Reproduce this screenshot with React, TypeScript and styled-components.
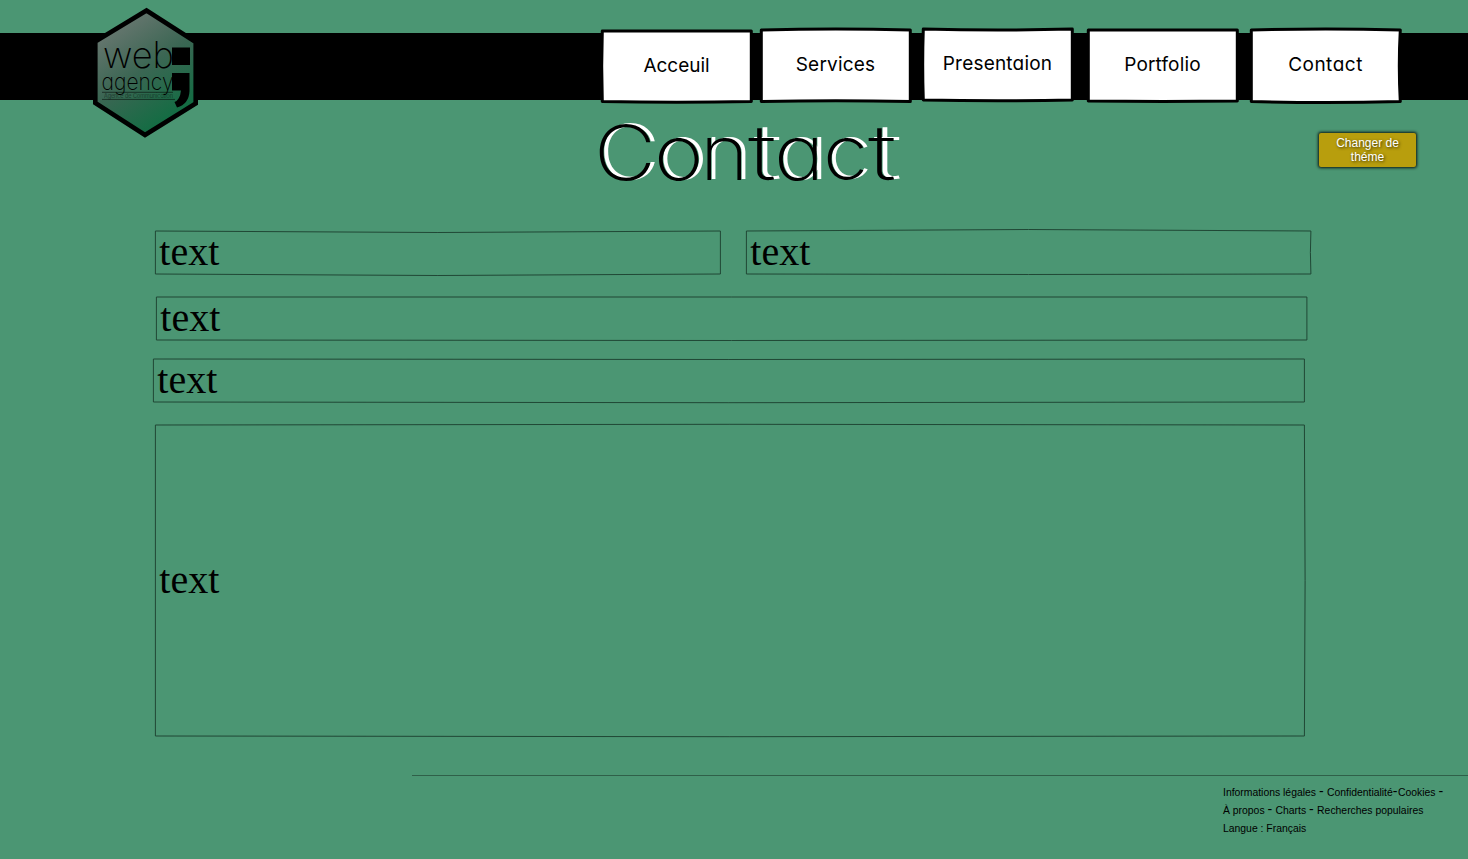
import React from "react";
import styled, { createGlobalStyle } from "styled-components";

const GlobalStyle = createGlobalStyle`
  * { box-sizing: border-box; }
  html, body { margin: 0; padding: 0; background: #4b9673; }
  body { width: 100%; height: 859px; overflow: hidden; color: #000; font-family: "Liberation Sans", Arial, sans-serif; }
`;

const Page = styled.div`
  height: 859px;
  overflow: hidden;
  display: flex;
  flex-direction: column;
`;

const Header = styled.header`
  margin-top: 33px;
  height: 67px;
  flex: none;
  background: #000;
  display: flex;
  align-items: flex-start;
  justify-content: space-between;
  padding: 0 68px 0 92px;
`;

const Logo = styled.svg`
  width: 108px;
  height: 132px;
  margin-top: -26px;
  overflow: visible;
  flex: none;
`;

const Nav = styled.nav`
  display: flex;
  align-items: flex-start;
`;

const NavLink = styled.a<{ $gap: number; $top: number; $height: number; $drop: number }>`
  position: relative;
  width: 149px;
  height: ${(p) => p.$height}px;
  margin-left: ${(p) => p.$gap}px;
  margin-top: ${(p) => p.$top}px;
  padding-top: ${(p) => p.$drop}px;
  display: flex;
  justify-content: center;
  color: #000;
`;

const NavLabel = styled.span<{ $spacing: number }>`
  position: relative;
  font: 370 19px/24px Inter, sans-serif;
  font-feature-settings: "cv11" 1;
  letter-spacing: ${(p) => p.$spacing}px;
  white-space: nowrap;
`;

const Outline = styled.svg`
  position: absolute;
  inset: 0;
  width: 100%;
  height: 100%;
  overflow: visible;
`;

const TitleRow = styled.div`
  height: 131px;
  flex: none;
  display: flex;
  justify-content: space-between;
  padding: 0 52px 0 594px;
`;

const Title = styled.h1`
  margin: 5px 0 0;
  font: 150 76px/94px Inter, sans-serif;
  font-feature-settings: "cv11" 1;
  color: #000;
  text-shadow: 4px -1px 0 #fff;
  white-space: nowrap;
`;

const Letter = styled.span<{ $w: number; $stretch: number }>`
  display: inline-block;
  width: ${(p) => p.$w}px;
  transform: scaleX(${(p) => p.$stretch});
  transform-origin: 0 50%;
`;

const ThemeButton = styled.button`
  width: 97px;
  height: 34px;
  margin-top: 33px;
  padding: 0 0 1px;
  border: 0;
  border-radius: 2px;
  background: #b89e0d;
  color: #fff;
  font: 12px/14px "Liberation Sans", Arial, sans-serif;
  text-shadow: 1px 1px 3px rgba(0, 0, 0, 0.7);
  box-shadow: 0 0 3px 1px rgba(0, 0, 0, 0.85);
`;

const Form = styled.form`
  display: flex;
  flex-direction: column;
  height: 505px;
  flex: none;
`;

const FieldRow = styled.div`
  display: flex;
  gap: 26px;
`;

const Field = styled.label<{ $x: number; $w: number; $h: number; $below: number }>`
  position: relative;
  margin-left: ${(p) => p.$x}px;
  margin-bottom: ${(p) => p.$below}px;
  width: ${(p) => p.$w}px;
  height: ${(p) => p.$h}px;
  padding: 0 4.3px 2px;
  display: flex;
  align-items: center;
  font: 40px/46px "Liberation Serif", "Times New Roman", serif;
`;

const Footer = styled.footer`
  margin-top: 39px;
  margin-left: 412px;
  border-top: 1px solid #2f6049;
  padding: 8px 0 0 811px;
  font-size: 10.4px;
  line-height: 18px;
  white-space: nowrap;
`;

const Dash = styled.span`
  font-size: 14px;
  line-height: 10px;
  letter-spacing: 0.5px;
`;

type Bow = { t?: number; r?: number; b?: number; l?: number };

type FrameProps = { w: number; h: number; bow: Bow; stroke: string; fill: string; width: number; dx?: number };

function SketchFrame({ w, h, bow, stroke, fill, width, dx = 0 }: FrameProps) {
  const { t = 0, r = 0, b = 0, l = 0 } = bow;
  const d = `M0 0Q${w / 2} ${t * 2} ${w} 0Q${w + r * 2} ${h / 2} ${w} ${h}Q${w / 2} ${h + b * 2} 0 ${h}Q${l * 2} ${h / 2} 0 0Z`;
  return (
    <Outline>
      <path d={d} transform={`translate(${dx} 0)`} fill={fill} stroke={stroke} strokeWidth={width} strokeLinejoin="round" />
    </Outline>
  );
}

const links = [
  { text: "Acceuil", gap: 0, top: -2, h: 70.5, drop: 23, spacing: -0.05, bow: { b: 0.8, l: -0.6 } },
  { text: "Services", gap: 10, top: -3, h: 71.5, drop: 23, spacing: 0.2, bow: { t: -1, b: -0.7 } },
  { text: "Presentaion", gap: 13, top: -4, h: 71, drop: 23, spacing: 0.2, bow: { t: 1, b: 0.8, l: -0.6 } },
  { text: "Portfolio", gap: 16, top: -3, h: 71, drop: 23, spacing: 0.15, bow: { b: 0.4 } },
  { text: "Contact", gap: 14, top: -3, h: 71.5, drop: 23, spacing: 0.5, bow: { t: -1, b: 1, r: -1 } },
];

const letters: [string, number, number][] = [
  ["C", 59.6, 1.12],
  ["o", 46.6, 1.11],
  ["n", 48, 1.09],
  ["t", 26.3, 1.38],
  ["a", 48.3, 1.12],
  ["c", 45.7, 1.08],
  ["t", 30, 1.38],
];

function TextField({ x = 0, w, h = 43, below = 0, bow }: { x?: number; w: number; h?: number; below?: number; bow: Bow }) {
  return (
    <Field $x={x} $w={w} $h={h} $below={below}>
      <SketchFrame w={w} h={h} bow={bow} stroke="#204735" fill="none" width={1} dx={0.4} />
      text
    </Field>
  );
}

export default function App() {
  return (
    <Page>
      <GlobalStyle />
      <Header>
        <Logo viewBox="92 7 108 132">
          <defs>
            <linearGradient id="hex" x1="0.15" y1="0" x2="0.7" y2="1">
              <stop offset="0" stopColor="#737b77" />
              <stop offset="0.5" stopColor="#3b6653" />
              <stop offset="1" stopColor="#0b6e40" />
            </linearGradient>
          </defs>
          <path d="M146.5 10.5L195.7 42V103.5L145 135L95.3 103V41.5Z" fill="url(#hex)" stroke="#000" strokeWidth="4.6" />
          <g fill="#000" fontFamily="Inter, sans-serif" style={{ fontFeatureSettings: '"cv11" 1' }}>
            <text x="103" y="68" fontSize="36" fontWeight="180" textLength="71" lengthAdjust="spacingAndGlyphs">web</text>
            <text x="101.5" y="90" fontSize="23" fontWeight="180" textLength="72" lengthAdjust="spacingAndGlyphs">agency</text>
            <text x="104" y="98" fontSize="5.5" fontWeight="300" opacity="0.6" textLength="69" lengthAdjust="spacingAndGlyphs">Agence de Communication</text>
          </g>
          <path d="M102 92.3H173M102 99.4H175" stroke="#000" strokeWidth="0.7" opacity="0.75" />
          <path d="M172 47.5H190V65H172Z" />
          <path d="M172 73H189.5V91Q189 104 177 107.5L174.5 102Q180 100 181 90.5H172Z" />
        </Logo>
        <Nav>
          {links.map((l) => (
            <NavLink key={l.text} $gap={l.gap} $top={l.top} $height={l.h} $drop={l.drop}>
              <SketchFrame w={149} h={l.h} bow={l.bow} stroke="#000" fill="#fff" width={3} dx={0.3} />
              <NavLabel $spacing={l.spacing}>{l.text}</NavLabel>
            </NavLink>
          ))}
        </Nav>
      </Header>
      <TitleRow>
        <Title>
          {letters.map(([c, w, s], i) => (
            <Letter key={i} $w={w} $stretch={s}>{c}</Letter>
          ))}
        </Title>
        <ThemeButton>Changer de<br />théme</ThemeButton>
      </TitleRow>
      <Form>
        <FieldRow>
          <TextField x={155} w={565} below={23} bow={{ t: 1.5, b: 1.5 }} />
          <TextField w={564.5} bow={{ t: -1.5, b: 0.5, r: -0.5 }} />
        </FieldRow>
        <TextField x={156} w={1150.5} below={19} bow={{ b: 0.5 }} />
        <TextField x={153} w={1151} below={23} bow={{ t: 0.5, b: 0.7 }} />
        <TextField x={155} w={1149} h={311} bow={{ t: -0.7, b: 0.7, r: 0.7 }} />
      </Form>
      <Footer>
        <div>Informations légales <Dash>-</Dash> Confidentialité<Dash>-</Dash>Cookies <Dash>-</Dash></div>
        <div>À propos <Dash>-</Dash> Charts <Dash>-</Dash> Recherches populaires</div>
        <div>Langue : Français</div>
      </Footer>
    </Page>
  );
}
